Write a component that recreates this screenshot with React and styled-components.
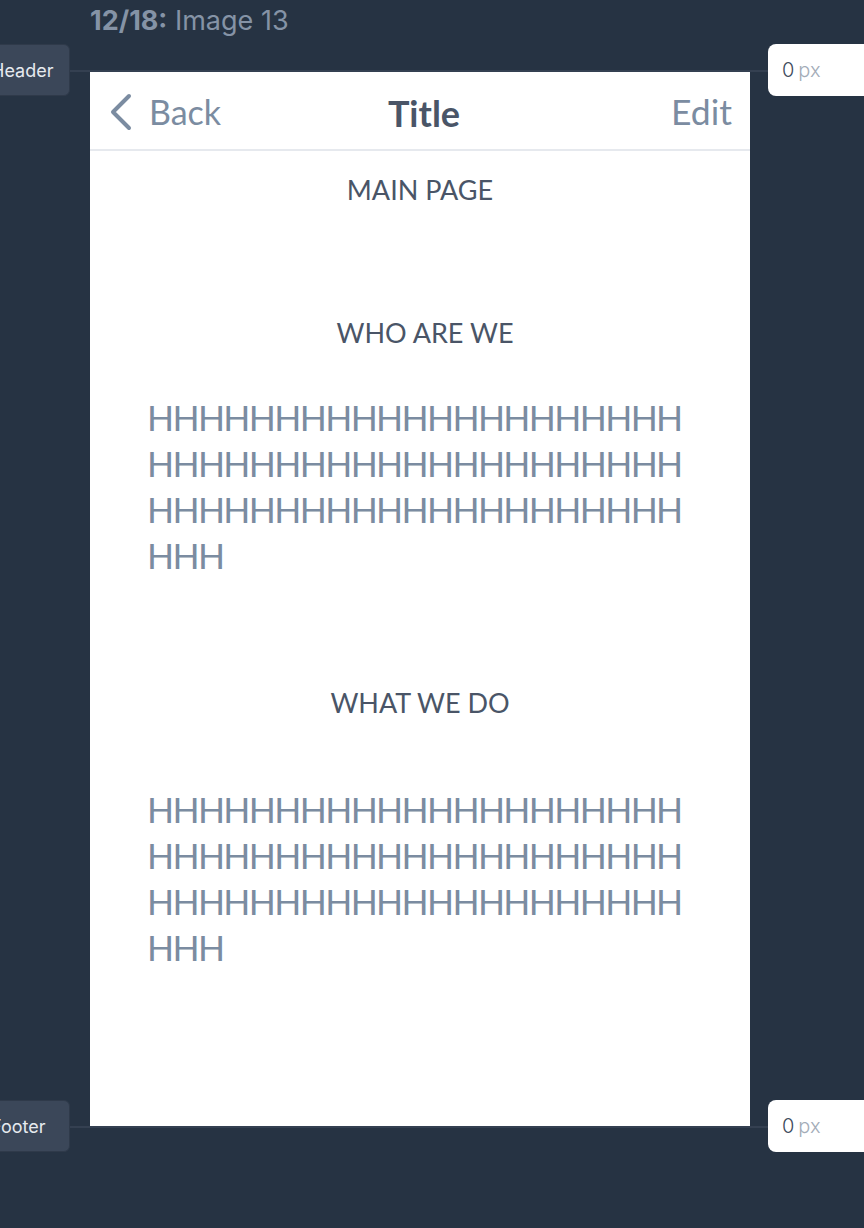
import React from "react";
import styled, { createGlobalStyle } from "styled-components";

const Global = createGlobalStyle`
  html, body { margin: 0; padding: 0; background: #263343; }
  body { font-family: Inter, "Noto Sans", sans-serif; overflow: hidden; }
`;

const Page = styled.div`
  width: 864px;
  height: 1228px;
  background: #263343;
  overflow: hidden;
  display: flex;
  flex-direction: column;
`;

const TopTitle = styled.div`
  height: 40px;
  padding-left: 90px;
  display: flex;
  align-items: center;
  font-family: Inter, sans-serif;
  font-size: 27px;
  color: #8593a6;
  b { font-weight: 700; }
  span { font-weight: 400; }
`;

const Stage = styled.div`
  position: relative;
  margin-top: 32px;
  display: grid;
  grid-template-columns: 90px 660px 1fr;
  &::before, &::after {
    content: "";
    position: absolute;
    left: 70px;
    width: 698px;
    height: 2px;
    background: #344051;
  }
  &::before { top: -2px; }
  &::after { bottom: -2px; }
`;

const Side = styled.div`
  display: flex;
  flex-direction: column;
  justify-content: space-between;
  align-items: ${(p) => (p.$right ? "flex-end" : "flex-start")};
  margin: -28px 0 -26px;
  position: relative;
  z-index: 1;
`;

const Marker = styled.div`
  height: 52px;
  width: 92px;
  box-sizing: border-box;
  display: flex;
  align-items: center;
  padding-left: 12px;
  margin-left: -22px;
  background: #3b4759;
  border: 1px solid #2f3a4a;
  border-radius: 6px;
  color: #e6eaef;
  font-size: 18px;
  font-family: Inter, sans-serif;
`;

const PxInput = styled.div`
  width: 110px;
  height: 52px;
  box-sizing: border-box;
  margin-right: -14px;
  background: #ffffff;
  border-radius: 8px;
  display: flex;
  align-items: center;
  padding-left: 14px;
  font-family: Inter, sans-serif;
  font-size: 20px;
  font-weight: 300;
  color: #3d4a5c;
  gap: 4px;
  span { color: #a3acb8; }
`;

const Phone = styled.div`
  height: 1054px;
  background: #ffffff;
  display: flex;
  flex-direction: column;
  position: relative;
  z-index: 2;
  font-family: Lato, "Open Sans", sans-serif;
`;

const NavBar = styled.div`
  height: 77px;
  border-bottom: 2px solid #e6e9ee;
  display: grid;
  grid-template-columns: 1fr auto 1fr;
  align-items: center;
  padding: 0 18px;
`;

const NavLink = styled.div`
  color: #7b8ca1;
  font-size: ${(p) => (p.$end ? 35.5 : 34)}px;
  display: flex;
  align-items: center;
  justify-content: ${(p) => (p.$end ? "flex-end" : "flex-start")};
  gap: 15px;
  padding-top: 2px;
`;

const NavTitle = styled.div`
  color: #4a5567;
  font-size: 36px;
  font-weight: 700;
  padding: 4px 0 0 8px;
`;

const Content = styled.div`
  padding: 19px 57px 0;
  display: flex;
  flex-direction: column;
`;

const Heading = styled.div`
  text-align: center;
  font-size: 27px;
  line-height: 40px;
  color: #4a5567;
  margin-top: ${(p) => p.$mt || 0}px;
  padding-left: ${(p) => p.$shift || 0}px;
`;

const Body = styled.div`
  font-size: 35.5px;
  letter-spacing: -1.65px;
  line-height: 46px;
  color: #7b8ca1;
  word-break: break-all;
  margin-top: ${(p) => p.$mt || 0}px;
`;

const Chevron = () => (
  <svg width="26" height="38" viewBox="0 0 26 38" fill="none">
    <path d="M21 3 L5 19 L21 35" stroke="#7b8ca1" strokeWidth="4" strokeLinecap="round" strokeLinejoin="round" />
  </svg>
);

const H = "H".repeat(66);

export default function App() {
  return (
    <Page>
      <Global />
      <TopTitle>
        <b>12/18:</b>&nbsp;<span>Image 13</span>
      </TopTitle>
      <Stage>
        <Side>
          <Marker>Header</Marker>
          <Marker>Footer</Marker>
        </Side>
        <Phone>
          <NavBar>
            <NavLink>
              <Chevron />
              Back
            </NavLink>
            <NavTitle>Title</NavTitle>
            <NavLink $end>Edit</NavLink>
          </NavBar>
          <Content>
            <Heading>MAIN PAGE</Heading>
            <Heading $mt={103} $shift={10}>WHO ARE WE</Heading>
            <Body $mt={42}>{H}</Body>
            <Heading $mt={104}>WHAT WE DO</Heading>
            <Body $mt={64}>{H}</Body>
          </Content>
        </Phone>
        <Side $right>
          <PxInput>0<span>px</span></PxInput>
          <PxInput>0<span>px</span></PxInput>
        </Side>
      </Stage>
    </Page>
  );
}
